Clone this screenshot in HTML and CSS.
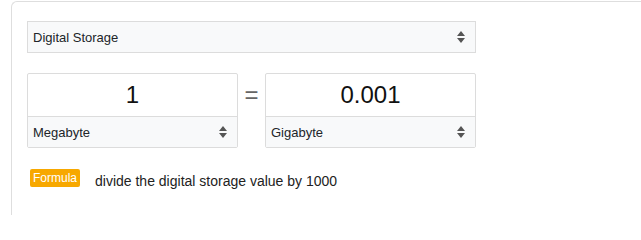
FILE: index.html
```html
<!DOCTYPE html>
<html>
<head>
<meta charset="utf-8">
<link rel="stylesheet" href="styles.css">
</head>
<body>
<div class="card">
  <div class="select wide">
    <span>Digital Storage</span>
    <svg class="arrows" width="8" height="12" viewBox="0 0 8 12"><path d="M4 0 L8 5 L0 5 Z M0 7 L8 7 L4 12 Z" fill="#555"/></svg>
  </div>
  <div class="convert">
    <div class="box">
      <div class="value">1</div>
      <div class="select unit">
        <span>Megabyte</span>
        <svg class="arrows" width="8" height="12" viewBox="0 0 8 12"><path d="M4 0 L8 5 L0 5 Z M0 7 L8 7 L4 12 Z" fill="#555"/></svg>
      </div>
    </div>
    <div class="equals">=</div>
    <div class="box">
      <div class="value">0.001</div>
      <div class="select unit">
        <span>Gigabyte</span>
        <svg class="arrows" width="8" height="12" viewBox="0 0 8 12"><path d="M4 0 L8 5 L0 5 Z M0 7 L8 7 L4 12 Z" fill="#555"/></svg>
      </div>
    </div>
  </div>
  <div class="formula">
    <span class="badge">Formula</span>
    <span class="desc">divide the digital storage value by 1000</span>
  </div>
</div>
</body>
</html>
```
FILE: styles.css
```css
html, body {
  margin: 0;
  padding: 0;
  background: #fff;
}
body {
  font-family: "Liberation Sans", Arial, sans-serif;
  color: #212529;
  width: 641px;
  height: 215px;
  overflow: hidden;
}
.card {
  margin: 1px 0 0 11px;
  border: 1px solid #dedede;
  border-right: none;
  border-bottom: none;
  border-radius: 6px 0 0 0;
  padding: 19px 0 0 15px;
  height: 220px;
  box-sizing: border-box;
}
.select {
  display: flex;
  align-items: center;
  justify-content: space-between;
  background: #f8f9fa;
  box-sizing: border-box;
  font-size: 13px;
  color: #212529;
}
.select.wide {
  width: 449px;
  height: 32px;
  border: 1px solid #dcdcdc;
  padding: 0 10px 0 5px;
}
.arrows {
  display: block;
}
.convert {
  display: flex;
  align-items: flex-start;
  margin-top: 20px;
}
.box {
  width: 211px;
  border: 1px solid #dcdcdc;
  border-radius: 2px;
  box-sizing: border-box;
  display: flex;
  flex-direction: column;
}
.value {
  height: 42px;
  display: flex;
  align-items: center;
  justify-content: center;
  font-size: 24px;
  color: #111;
  border-bottom: 1px solid #dcdcdc;
}
.select.unit {
  height: 30px;
  padding: 0 10px 0 5px;
}
.equals {
  width: 27px;
  text-align: center;
  font-size: 24px;
  color: #666;
  line-height: 1;
  padding-top: 10px;
}
.formula {
  display: flex;
  align-items: flex-start;
  margin-top: 21px;
  padding-left: 3px;
}
.badge {
  background: #f7a800;
  color: #fff;
  font-size: 12px;
  padding: 2px 3px;
  border-radius: 2px;
  line-height: 14px;
}
.desc {
  margin-left: 15px;
  font-size: 14px;
  color: #222;
  line-height: 16px;
  padding-top: 4px;
}
```
